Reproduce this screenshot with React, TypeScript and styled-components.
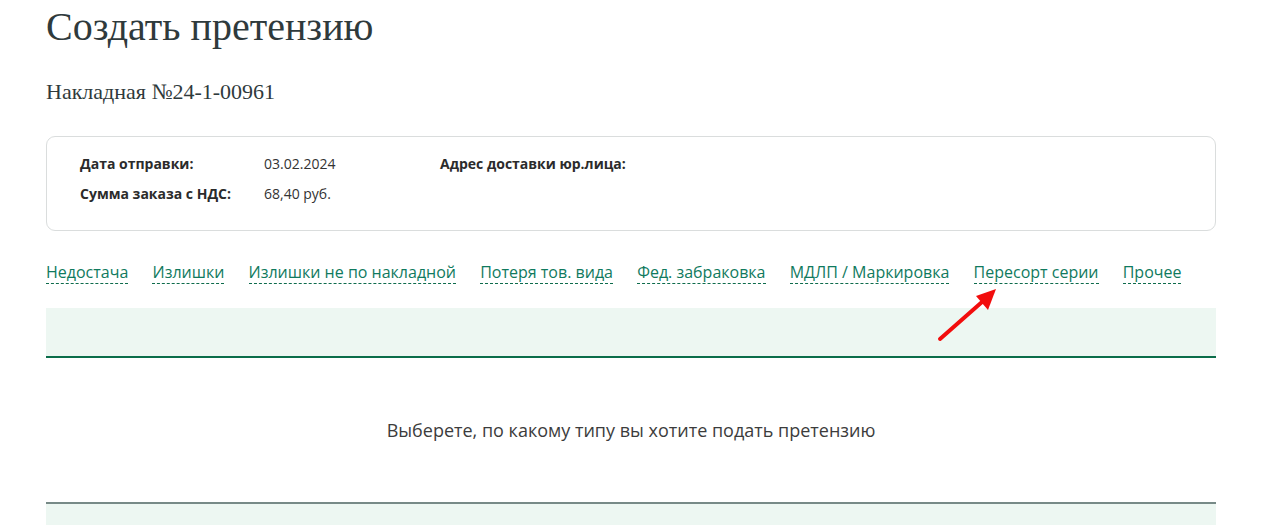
import React from "react";
import styled, { createGlobalStyle } from "styled-components";

const Global = createGlobalStyle`
  html, body { margin: 0; padding: 0; background: #fff; }
  body { font-family: "Open Sans", "Noto Sans", sans-serif; color: #333; overflow: hidden; }
`;

const Page = styled.div`
  width: 1170px;
  padding: 0 0 0 46px;
  position: relative;
`;

const Title = styled.h1`
  margin: 0;
  padding-top: 5px;
  font-family: "Liberation Serif", serif;
  font-weight: 400;
  font-size: 40px;
  line-height: 44px;
  color: #2f3a3c;
`;

const Subtitle = styled.h2`
  margin: 30px 0 0;
  font-family: "Liberation Serif", serif;
  font-weight: 400;
  font-size: 22px;
  line-height: 26px;
  color: #2f3a3c;
`;

const InfoCard = styled.div`
  margin-top: 31px;
  box-sizing: border-box;
  height: 95px;
  border: 1px solid #dadddd;
  border-radius: 9px;
  padding: 11px 33px;
  display: grid;
  grid-template-columns: 184px 176px auto;
  grid-auto-rows: 30px;
  align-items: center;
  font-size: 14px;
`;

const Label = styled.span`
  font-weight: 700;
  color: #2b2b2b;
`;

const Value = styled.span`
  color: #333;
`;

const Tabs = styled.nav`
  margin-top: 30px;
  display: flex;
  gap: 24.2px;
`;

const Tab = styled.a`
  font-size: 16px;
  line-height: 22px;
  color: #107a5e;
  text-decoration: none;
  border-bottom: 1px dashed #0d6b4c;
  cursor: pointer;
`;

const Band = styled.div`
  margin-top: 24px;
  height: 48px;
  background: #edf7f2;
  border-bottom: 2px solid #0b6d4a;
`;

const Empty = styled.div`
  height: 144px;
  display: flex;
  align-items: center;
  justify-content: center;
  font-size: 18px;
  color: #3c3c3c;
`;

const Footer = styled.div`
  height: 60px;
  background: #edf7f2;
  border-top: 2px solid #778a87;
`;

const Pointer = styled.svg`
  position: absolute;
  left: 930px;
  top: 282px;
  width: 76px;
  height: 68px;
  pointer-events: none;
`;

const tabs = [
  "Недостача",
  "Излишки",
  "Излишки не по накладной",
  "Потеря тов. вида",
  "Фед. забраковка",
  "МДЛП / Маркировка",
  "Пересорт серии",
  "Прочее",
];

export default function App() {
  return (
    <Page>
      <Global />
      <Title>Создать претензию</Title>
      <Subtitle>Накладная №24-1-00961</Subtitle>
      <InfoCard>
        <Label>Дата отправки:</Label>
        <Value>03.02.2024</Value>
        <Label>Адрес доставки юр.лица:</Label>
        <Label>Сумма заказа с НДС:</Label>
        <Value>68,40 руб.</Value>
      </InfoCard>
      <Tabs>
        {tabs.map((t) => (
          <Tab key={t}>{t}</Tab>
        ))}
      </Tabs>
      <Band />
      <Empty>Выберете, по какому типу вы хотите подать претензию</Empty>
      <Footer />
      <Pointer viewBox="0 0 76 68">
        <line x1="10" y1="57" x2="52" y2="20" stroke="#f20d0d" strokeWidth="4" strokeLinecap="round" />
        <polygon points="66,7 46,14 58,28" fill="#f20d0d" />
      </Pointer>
    </Page>
  );
}
